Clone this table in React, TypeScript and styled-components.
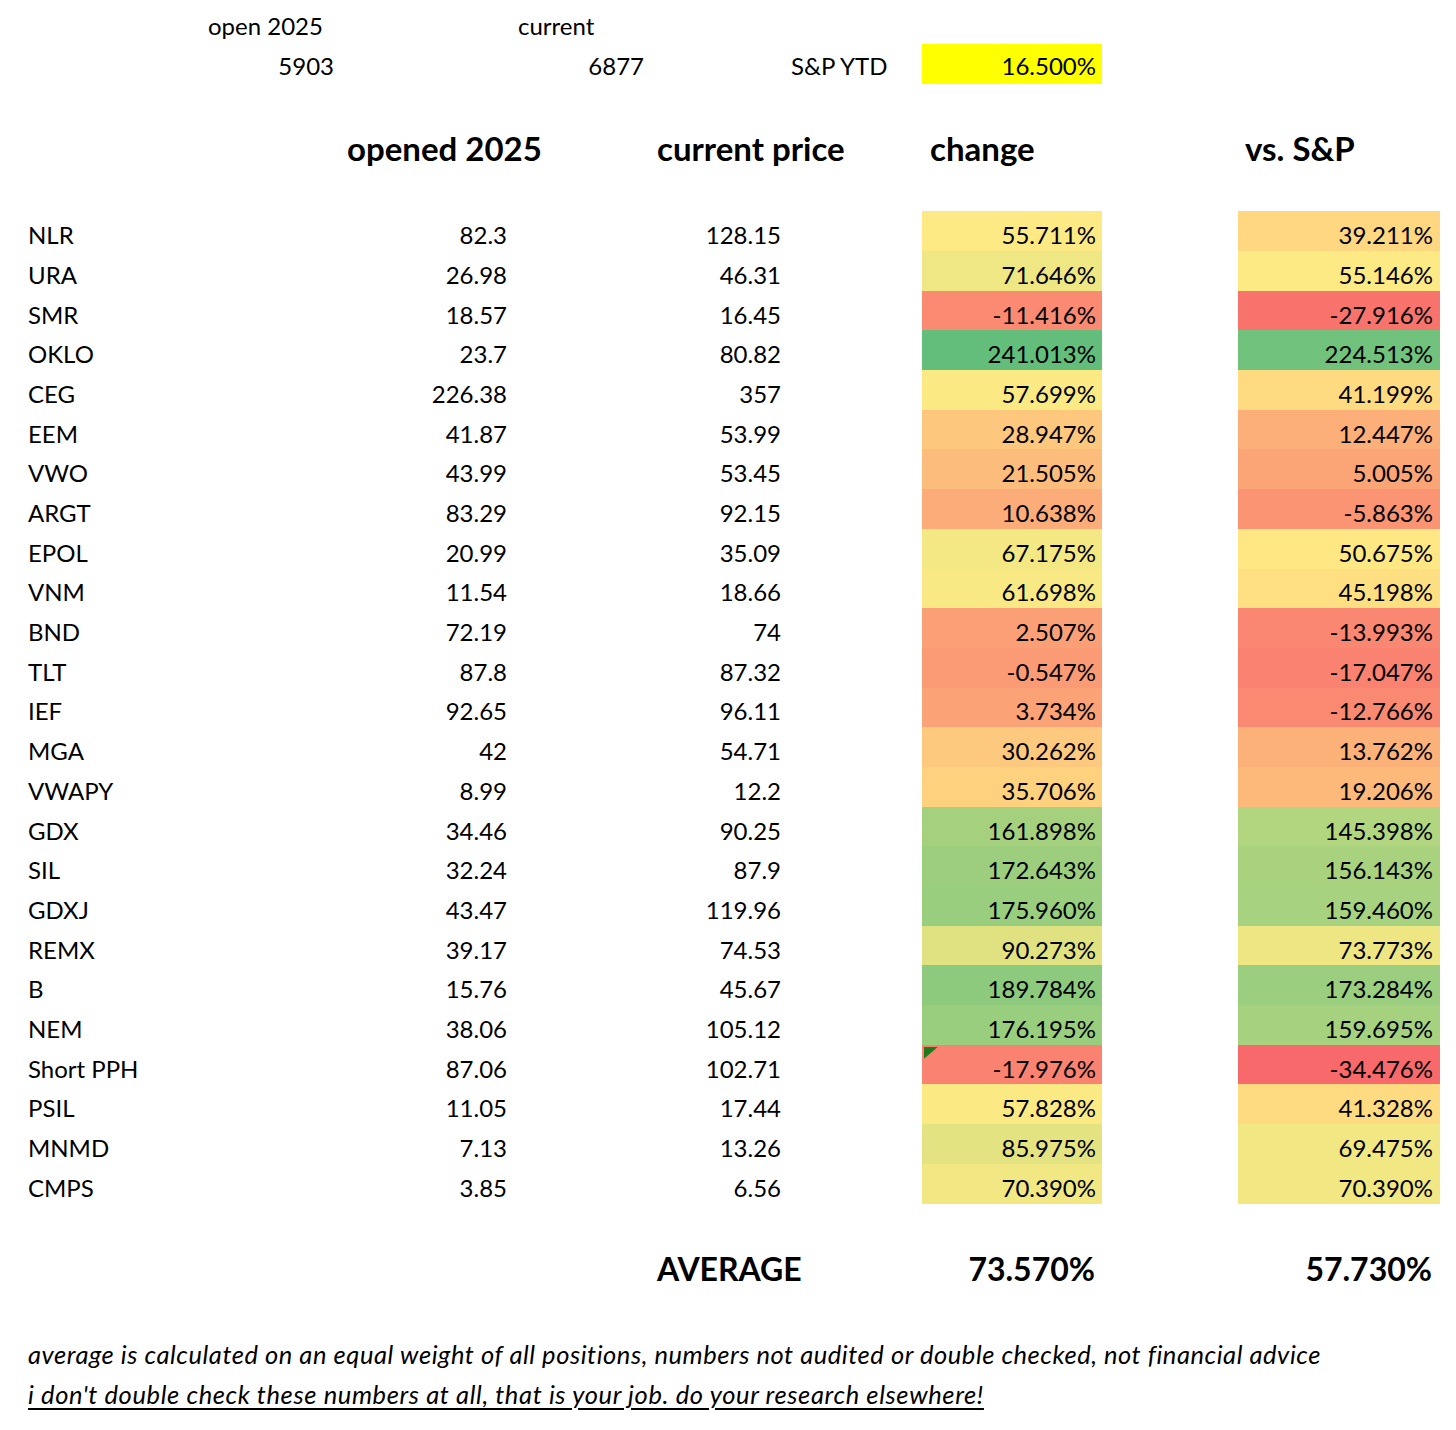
import React from "react";
import styled, { createGlobalStyle, css } from "styled-components";

const GlobalStyle = createGlobalStyle`
  html, body { margin: 0; padding: 0; background: #ffffff; }
  body { font-family: Lato, "Open Sans", "Liberation Sans", sans-serif; color: #000; }
`;

const COLS = "180px 140px 175px 135px 140px 132px 180px 136px 202px";
const ROW_H = 39.7;

type Datum = [string, string, string, number, number];

const data: Datum[] = [
  ["NLR", "82.3", "128.15", 55.711, 39.211],
  ["URA", "26.98", "46.31", 71.646, 55.146],
  ["SMR", "18.57", "16.45", -11.416, -27.916],
  ["OKLO", "23.7", "80.82", 241.013, 224.513],
  ["CEG", "226.38", "357", 57.699, 41.199],
  ["EEM", "41.87", "53.99", 28.947, 12.447],
  ["VWO", "43.99", "53.45", 21.505, 5.005],
  ["ARGT", "83.29", "92.15", 10.638, -5.863],
  ["EPOL", "20.99", "35.09", 67.175, 50.675],
  ["VNM", "11.54", "18.66", 61.698, 45.198],
  ["BND", "72.19", "74", 2.507, -13.993],
  ["TLT", "87.8", "87.32", -0.547, -17.047],
  ["IEF", "92.65", "96.11", 3.734, -12.766],
  ["MGA", "42", "54.71", 30.262, 13.762],
  ["VWAPY", "8.99", "12.2", 35.706, 19.206],
  ["GDX", "34.46", "90.25", 161.898, 145.398],
  ["SIL", "32.24", "87.9", 172.643, 156.143],
  ["GDXJ", "43.47", "119.96", 175.96, 159.46],
  ["REMX", "39.17", "74.53", 90.273, 73.773],
  ["B", "15.76", "45.67", 189.784, 173.284],
  ["NEM", "38.06", "105.12", 176.195, 159.695],
  ["Short PPH", "87.06", "102.71", -17.976, -34.476],
  ["PSIL", "11.05", "17.44", 57.828, 41.328],
  ["MNMD", "7.13", "13.26", 85.975, 69.475],
  ["CMPS", "3.85", "6.56", 70.39, 70.39],
];

const RED = [248, 105, 107];
const YEL = [255, 235, 132];
const GRN = [99, 190, 123];

function median(vals: number[]) {
  const s = [...vals].sort((a, b) => a - b);
  const pos = (s.length - 1) * 0.5;
  const lo = Math.floor(pos);
  const hi = Math.ceil(pos);
  return s[lo] + (s[hi] - s[lo]) * (pos - lo);
}

function makeScale(vals: number[]) {
  const min = Math.min(...vals);
  const max = Math.max(...vals);
  const mid = median(vals);
  return (v: number) => {
    let a: number[], b: number[], t: number;
    if (v <= mid) {
      a = RED; b = YEL; t = mid === min ? 1 : (v - min) / (mid - min);
    } else {
      a = YEL; b = GRN; t = max === mid ? 0 : (v - mid) / (max - mid);
    }
    const c = a.map((x, i) => Math.round(x + (b[i] - x) * t));
    return `rgb(${c[0]}, ${c[1]}, ${c[2]})`;
  };
}

const pct = (v: number) => `${v.toFixed(3)}%`;

const Sheet = styled.div`
  display: flex;
  flex-direction: column;
  padding: 4.6px 0 0 20px;
  width: 1420px;
`;

const Row = styled.div<{ $h?: number }>`
  display: grid;
  grid-template-columns: ${COLS};
  height: ${(p) => p.$h ?? ROW_H}px;
`;

type Variant = "normal" | "label" | "header" | "total" | "note" | "noteLink";

const variants: Record<Variant, ReturnType<typeof css>> = {
  normal: css`
    font-size: 24px;
    padding-bottom: 1px;
  `,
  label: css`
    font-size: 24px;
    padding-bottom: 3px;
  `,
  header: css`
    font-size: 33px;
    font-weight: 700;
    padding-bottom: 3px;
  `,
  total: css`
    font-size: 32px;
    font-weight: 700;
    padding-bottom: 3px;
  `,
  note: css`
    font-size: 25.5px;
    font-style: italic;
    letter-spacing: 0.55px;
    padding-bottom: 1px;
  `,
  noteLink: css`
    font-size: 25.5px;
    font-style: italic;
    letter-spacing: 0.62px;
    padding-bottom: 1px;
    text-decoration: underline;
    text-decoration-thickness: 2px;
    text-underline-offset: 4px;
  `,
};

const Cell = styled.div<{
  $col: number;
  $span?: number;
  $align?: "left" | "right";
  $bg?: string;
  $variant?: Variant;
  $pad?: number;
}>`
  position: relative;
  grid-column: ${(p) => p.$col} / span ${(p) => p.$span ?? 1};
  display: flex;
  align-items: flex-end;
  justify-content: ${(p) => (p.$align === "right" ? "flex-end" : "flex-start")};
  white-space: nowrap;
  overflow: visible;
  background: ${(p) => p.$bg ?? "transparent"};
  padding-left: ${(p) => (p.$align === "right" ? 0 : p.$pad ?? 8)}px;
  padding-right: ${(p) => (p.$align === "right" ? p.$pad ?? 7 : 0)}px;
  line-height: 1.2;
  ${(p) => variants[p.$variant ?? "normal"]}
`;

const ErrorMark = styled.span`
  position: absolute;
  left: 2px;
  top: 2px;
  width: 14px;
  height: 12px;
  background: #1f7a1f;
  clip-path: polygon(0 0, 100% 0, 0 100%);
`;

export default function App() {
  const scale = makeScale([...data.map((d) => d[3]), ...data.map((d) => d[4])]);
  return (
    <>
      <GlobalStyle />
      <Sheet>
        <Row>
          <Cell $col={2} $variant="label">open 2025</Cell>
          <Cell $col={4} $variant="label" $pad={3}>current</Cell>
        </Row>
        <Row>
          <Cell $col={2} $variant="label" $align="right" $pad={6}>5903</Cell>
          <Cell $col={4} $variant="label" $align="right" $pad={6}>6877</Cell>
          <Cell $col={6} $variant="label" $pad={1}>S&amp;P YTD</Cell>
          <Cell $col={7} $variant="label" $align="right" $pad={6} $bg="#ffff00">16.500%</Cell>
        </Row>
        <Row />
        <Row $h={48}>
          <Cell $col={3} $variant="header" $pad={7}>opened 2025</Cell>
          <Cell $col={5} $variant="header" $pad={7}>current price</Cell>
          <Cell $col={7} $variant="header" $pad={8}>change</Cell>
          <Cell $col={9} $variant="header" $pad={7}>vs. S&amp;P</Cell>
        </Row>
        <Row />
        {data.map(([tick, open, cur, ch, v]) => (
          <Row key={tick}>
            <Cell $col={1}>{tick}</Cell>
            <Cell $col={3} $align="right" $pad={8}>{open}</Cell>
            <Cell $col={5} $align="right" $pad={9}>{cur}</Cell>
            <Cell $col={7} $align="right" $pad={6} $bg={scale(ch)}>
              {tick === "Short PPH" && <ErrorMark />}
              {pct(ch)}
            </Cell>
            <Cell $col={9} $align="right" $pad={7} $bg={scale(v)}>
              {pct(v)}
            </Cell>
          </Row>
        ))}
        <Row />
        <Row $h={48}>
          <Cell $col={5} $variant="total" $pad={7}>AVERAGE</Cell>
          <Cell $col={7} $variant="total" $align="right" $pad={7}>73.570%</Cell>
          <Cell $col={9} $variant="total" $align="right" $pad={8}>57.730%</Cell>
        </Row>
        <Row />
        <Row>
          <Cell $col={1} $span={9} $variant="note">
            average is calculated on an equal weight of all positions, numbers not audited or double checked, not financial advice
          </Cell>
        </Row>
        <Row>
          <Cell $col={1} $span={9} $variant="noteLink">
            i don't double check these numbers at all, that is your job. do your research elsewhere!
          </Cell>
        </Row>
      </Sheet>
    </>
  );
}
